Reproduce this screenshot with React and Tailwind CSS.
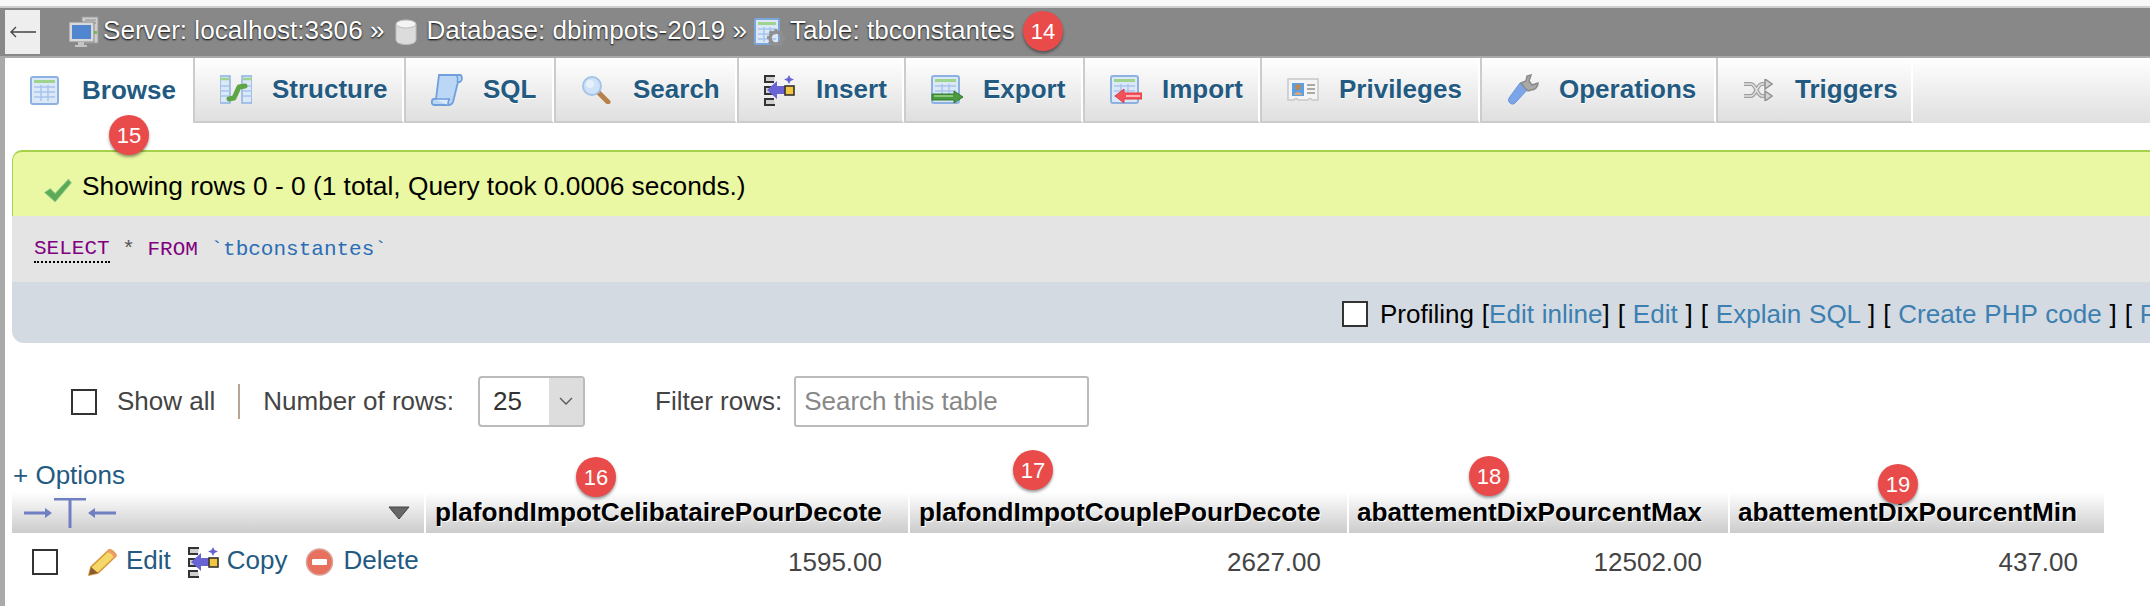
import React from 'react';

const TableBase = ({ children }) => (
    <svg width="32" height="30" viewBox="0 0 32 30">
        <rect x="1" y="1" width="27" height="27" rx="2" fill="#dbe8f8" stroke="#8db2e2" strokeWidth="2" />
        <rect x="4" y="4" width="21" height="3" fill="#9fd48c" />
        <path d="M4 11h21M4 16h21M4 21h21M11 9v16M18 9v16" stroke="#a9c4ea" strokeWidth="1.5" />
        {children}
    </svg>
);

const BrowseIcon = () => <TableBase />;

const StructureIcon = () => (
    <svg width="32" height="30" viewBox="0 0 32 30">
        <path d="M0 1h10v27H0z" fill="#dbe8f8" stroke="#8db2e2" strokeWidth="1.5" />
        <path d="M32 1H22v27h10z" fill="#dbe8f8" stroke="#8db2e2" strokeWidth="1.5" />
        <path d="M0 4h9M23 4h9" stroke="#9fd48c" strokeWidth="2.5" />
        <path d="M1 11h8M1 16h8M1 21h8M23 11h9M23 16h9M23 21h9" stroke="#a9c4ea" strokeWidth="1.5" />
        <path d="M9 24l5-1 5-11 6-1" fill="none" stroke="#5ea545" strokeWidth="5" strokeLinecap="round" strokeLinejoin="round" />
    </svg>
);

const SqlIcon = () => (
    <svg width="32" height="32" viewBox="0 0 32 32">
        <path d="M8 1h21c2 0 3 6 0 7h-2l-5 20c-1 3-3 3-5 3H3c-3 0-3-6 0-6h2z" fill="#bcd6f5" stroke="#6f9fdc" strokeWidth="1.8" />
        <path d="M3 25h16c-2 1-2 4-2 6" fill="#dcebfb" stroke="#6f9fdc" strokeWidth="1.6" />
        <path d="M25 1c2 1 2 5 1 7" fill="none" stroke="#6f9fdc" strokeWidth="1.4" />
    </svg>
);

const SearchIcon = () => (
    <svg width="30" height="28" viewBox="0 0 30 28">
        <path d="M18 17l9 9" stroke="#b8814a" strokeWidth="5" strokeLinecap="round" />
        <circle cx="11" cy="10" r="9" fill="#cfe2f8" stroke="#a3c4e8" strokeWidth="2" />
        <circle cx="9" cy="8" r="4" fill="#e6f1fc" />
    </svg>
);

const InsertIcon = () => (
    <svg width="31" height="32" viewBox="0 0 31 32">
        <path d="M11 2H1v6h9M9 13H1v7h8M10 25H1v6h10" fill="#d0d0d0" stroke="#333" strokeWidth="2" />
        <path d="M3 16l10-9v5h8v8h-8v5z" fill="#6a63d6" />
        <rect x="21" y="12" width="9" height="9" fill="#f3c63f" stroke="#333" strokeWidth="1.6" />
        <path d="M25 1l1.500 3L30 5.500 26.500 7 25 10l-1.500-3L20 5.500 23.500 4z" fill="#6a63d6" />
    </svg>
);

const ExportIcon = () => (
    <TableBase>
        <path d="M1 19h22v-3l9 6-9 6v-3H1z" fill="#4c9a3f" stroke="#2f7a2c" strokeWidth="1" />
        <path d="M3 21h19" stroke="#9fd48c" strokeWidth="1.5" />
    </TableBase>
);

const ImportIcon = () => (
    <TableBase>
        <path d="M32 18H14v-4l-9 7 9 7v-4h18z" fill="#f0545a" stroke="#e53a3f" strokeWidth="1" />
        <path d="M16 21h14" stroke="#ffb4b4" strokeWidth="2" />
    </TableBase>
);

const PrivilegesIcon = () => (
    <svg width="32" height="24" viewBox="0 0 32 24">
        <path d="M1 1h30v21h-6c-1-2-3-2-4 0H11c-1-2-3-2-4 0H1z" fill="#f4f4f4" stroke="#c8c8c8" strokeWidth="1.5" />
        <rect x="5" y="5" width="12" height="13" fill="#5b9fe6" />
        <circle cx="11" cy="9" r="3" fill="#b98a58" />
        <path d="M7 17c0-4 8-4 8 0z" fill="#d8a878" />
        <path d="M20 7h8M20 11h8M20 15h8" stroke="#a9a9a9" strokeWidth="2" />
    </svg>
);

const OperationsIcon = () => (
    <svg width="34" height="32" viewBox="0 0 34 32">
        <path d="M21 15L8 29c-3 3-8-1-6-5l11-15z" fill="#7ba5e8" stroke="#6a93d8" strokeWidth="1" />
        <path d="M14 9l5-2 1-5 4-1-2 6 3 4 6-2c0 4-3 7-7 7l-3 1-4-4z" fill="#a9a9a9" stroke="#8a8a8a" strokeWidth="1.5" />
    </svg>
);

const TriggersIcon = () => (
    <svg width="30" height="22" viewBox="0 0 30 22">
        <path d="M1 5h7c5 0 6 12 11 12h5M1 17h7c5 0 6-12 11-12h5" fill="none" stroke="#a0a0a0" strokeWidth="4" />
        <path d="M1 5h7c5 0 6 12 11 12h5M1 17h7c5 0 6-12 11-12h5" fill="none" stroke="#e2e2e2" strokeWidth="1.500" />
        <path d="M22 0l7 5-7 5zM22 12l7 5-7 5z" fill="#d4d4d4" stroke="#909090" strokeWidth="1.500" />
    </svg>
);

const ServerIcon = () => (
    <svg width="31" height="32" viewBox="0 0 31 32">
        <path d="M14 1h16v26H14z" fill="#cfcfcf" stroke="#9a9a9a" />
        <path d="M17 4h11M17 7h11" stroke="#8a8a8a" />
        <rect x="26" y="15" width="3" height="3" fill="#6fc04f" />
        <rect x="1" y="6" width="25" height="20" fill="#d8d8d8" stroke="#8a8a8a" />
        <rect x="4" y="9" width="19" height="14" fill="#4f86cf" />
        <path d="M10 26h6v3h3v2H7v-2h3z" fill="#c4c4c4" />
    </svg>
);

const DatabaseIcon = () => (
    <svg width="22" height="26" viewBox="0 0 22 26">
        <path d="M1 5v16c0 6 20 6 20 0V5z" fill="#dcdcdc" stroke="#bdbdbd" />
        <ellipse cx="11" cy="5" rx="10" ry="4" fill="#f4f4f4" stroke="#bdbdbd" />
    </svg>
);

const TableGearIcon = () => (
    <svg width="31" height="29" viewBox="0 0 31 29">
        <rect x="1" y="1" width="24" height="25" rx="1" fill="#dbe8f8" stroke="#7ea6de" strokeWidth="2" />
        <rect x="4" y="4" width="18" height="3" fill="#9fd48c" />
        <path d="M4 11h18M4 16h18M4 21h18M10 9v15M16 9v15" stroke="#a9c4ea" strokeWidth="1.5" />
        <circle cx="22" cy="20" r="6" fill="none" stroke="#8f8f8f" strokeWidth="3.500" />
        <circle cx="22" cy="20" r="8" fill="none" stroke="#8f8f8f" strokeWidth="2" strokeDasharray="3 3" />
    </svg>
);

const PencilIcon = () => (
    <svg width="31" height="29" viewBox="0 0 31 29">
        <path d="M2 27l2-8L22 2c2-1 7 3 7 6L11 25z" fill="#f5d76a" stroke="#d9993a" strokeWidth="1.600" />
        <path d="M2 27l2-8 7 6z" fill="#8a5a30" />
        <path d="M21 3c3 0 6 3 7 6" stroke="#f09a6a" strokeWidth="3" fill="none" />
    </svg>
);

const DeleteIcon = () => (
    <svg width="29" height="28" viewBox="0 0 29 28">
        <circle cx="14.500" cy="14" r="13" fill="#e8705f" stroke="#d9a39a" strokeWidth="1.500" />
        <rect x="7" y="11" width="15" height="6" rx="1" fill="#fff" />
    </svg>
);

const ResizeIcon = () => (
    <svg width="92" height="30" viewBox="0 0 92 30">
        <path d="M0 15h23M30 1h32M46 1v29M69 15h23" fill="none" stroke="#707fc2" strokeWidth="3" />
        <path d="M21 10l7 5-7 5zM71 10l-7 5 7 5z" fill="#707fc2" />
    </svg>
);

const tabs = [
    { name: 'Browse', Icon: BrowseIcon, width: 'w-[188px]', active: true },
    { name: 'Structure', Icon: StructureIcon, width: 'w-[211px]' },
    { name: 'SQL', Icon: SqlIcon, width: 'w-[150px]' },
    { name: 'Search', Icon: SearchIcon, width: 'w-[183px]' },
    { name: 'Insert', Icon: InsertIcon, width: 'w-[167px]' },
    { name: 'Export', Icon: ExportIcon, width: 'w-[179px]' },
    { name: 'Import', Icon: ImportIcon, width: 'w-[177px]' },
    { name: 'Privileges', Icon: PrivilegesIcon, width: 'w-[220px]' },
    { name: 'Operations', Icon: OperationsIcon, width: 'w-[236px]' },
    { name: 'Triggers', Icon: TriggersIcon, width: 'w-[197px]' },
];

const columns = [
    { name: 'plafondImpotCelibatairePourDecote', value: '1595.00', pad: 'pl-[9px]' },
    { name: 'plafondImpotCouplePourDecote', value: '2627.00', pad: 'pl-[9px]' },
    { name: 'abattementDixPourcentMax', value: '12502.00', pad: 'pl-[8px]' },
    { name: 'abattementDixPourcentMin', value: '437.00', pad: 'pl-[8px]' },
];

const badges = [
    { n: 14, pos: 'left-[1023px] top-[11px]' },
    { n: 15, pos: 'left-[109px] top-[115px]' },
    { n: 16, pos: 'left-[576px] top-[457px]' },
    { n: 17, pos: 'left-[1013px] top-[450px]' },
    { n: 18, pos: 'left-[1469px] top-[456px]' },
    { n: 19, pos: 'left-[1878px] top-[464px]' },
];

export default function App() {
    return (
        <div className="relative w-[2150px] h-[606px] overflow-hidden bg-white font-['Liberation_Sans',Arial,sans-serif] text-[26px] text-black">
            {/* Top strip */}
            <div className="h-[8px] bg-[#f8f8f8] border-b-2 border-[#cfcfcf]" />

            {/* Breadcrumb */}
            <div className="flex items-center h-[48px] bg-[#888888] pl-[5px] text-[26.1px] text-white [text-shadow:0_1px_2px_#000] whitespace-nowrap">
                <div className="flex items-center justify-center w-[35px] h-[44px] bg-[#eeeeee]">
                    <svg width="26" height="12" viewBox="0 0 26 12"><path d="M1 6h25M6 1L1 6l5 5" fill="none" stroke="#444" strokeWidth="1.300" /></svg>
                </div>
                <span className="ml-[28px] blur-[0.4px]"><ServerIcon /></span>
                <span className="ml-[4px] -mt-[2px]">Server: localhost:3306 »</span>
                <span className="ml-[11px] blur-[0.4px]"><DatabaseIcon /></span>
                <span className="ml-[9px] -mt-[2px]">Database: dbimpots-2019 »</span>
                <span className="ml-[7px] blur-[0.4px]"><TableGearIcon /></span>
                <span className="ml-[5px] -mt-[2px]">Table: tbconstantes</span>
            </div>
            <div className="h-[2px] bg-[#aaaaaa]" />

            <div className="border-l-[5px] border-[#aaaaaa] h-[548px]">
                {/* Tabs */}
                <div className="flex h-[65px] bg-gradient-to-b from-white to-[#dfdfdf]">
                    {tabs.map(({ name, Icon, width, active }) => (
                        <div
                            key={name}
                            className={`flex items-center pl-[25px] ${width} ${active ? 'bg-white' : 'bg-gradient-to-b from-white to-[#dfdfdf] border-l-2 border-b-2 border-[#cccccc] border-r-2 border-r-white'}`}
                        >
                            <span className="w-[52px] shrink-0 blur-[0.4px]"><Icon /></span>
                            <span className="font-bold text-[26px] text-[#235a81] [text-shadow:0_1px_0_#fff]">{name}</span>
                        </div>
                    ))}
                </div>

                {/* Result message + query box */}
                <div className="mt-[27px] ml-[7px]">
                    <div className="flex items-center h-[66px] pl-[30px] pt-[6px] bg-[#eaf8a3] border-t-2 border-l border-[#a6d24b] rounded-tl-[10px] gap-[9px]">
                        <svg width="30" height="25" viewBox="0 0 30 26" className="mt-[6px] blur-[0.4px]">
                            <path d="M1 15l6-4 5 5L26 1c1 2 2 3 3 4L12 25z" fill="#5cab57" stroke="#9ccf97" strokeWidth="1" />
                        </svg>
                        <span className="text-[26.3px]">Showing rows 0 - 0 (1 total, Query took 0.0006 seconds.)</span>
                    </div>
                    <div className="flex items-center h-[66px] pl-[22px] pt-[1px] bg-[#e4e4e4] font-['Liberation_Mono',monospace] text-[21px]">
                        <span className="text-[#800080] border-b-2 border-dotted border-black leading-[24px]">SELECT</span>
                        <span className="text-[#555] whitespace-pre"> * </span>
                        <span className="text-[#800080]">FROM</span>
                        <span className="text-[#2a6db5] whitespace-pre"> `tbconstantes`</span>
                    </div>
                    <div className="flex items-center h-[61px] pl-[1330px] pt-[3px] bg-[#d3dae1] rounded-bl-[12px] whitespace-pre [word-spacing:0.7px]">
                        <input type="checkbox" className="appearance-none shrink-0 w-[26px] h-[26px] bg-white border-2 border-[#333]" />
                        <span className="ml-[12px]">Profiling [<span className="text-[#3c7fb1]">Edit inline</span>] [ <span className="text-[#3c7fb1]">Edit</span> ] [ <span className="text-[#3c7fb1]">Explain SQL</span> ] [ <span className="text-[#3c7fb1]">Create PHP code</span> ] [ <span className="text-[#3c7fb1]">Refresh</span> ]</span>
                    </div>
                </div>

                {/* Row controls */}
                <div className="flex items-center h-[51px] mt-[33px] pl-[66px] text-[#444] whitespace-nowrap">
                    <input type="checkbox" className="appearance-none shrink-0 w-[26px] h-[26px] bg-white border-2 border-[#333]" />
                    <span className="ml-[20px]">Show all</span>
                    <span className="ml-[23px] w-[2px] h-[35px] bg-[#b9a594]" />
                    <span className="ml-[23px]">Number of rows:</span>
                    <div className="flex ml-[24px] w-[107px] h-[51px] border-2 border-[#bbbbbb] rounded-[4px] overflow-hidden text-[#333]">
                        <span className="flex items-center flex-1 pl-[13px]">25</span>
                        <span className="flex items-center justify-center w-[34px] bg-[#dddddd]">
                            <svg width="14" height="9" viewBox="0 0 14 9"><path d="M1 1l6 6 6-6" fill="none" stroke="#555" strokeWidth="1.300" /></svg>
                        </span>
                    </div>
                    <span className="ml-[70px]">Filter rows:</span>
                    <input
                        placeholder="Search this table"
                        className="ml-[12px] w-[295px] h-[51px] px-[8px] bg-white border-2 border-[#bbbbbb] rounded-[3px] placeholder:text-[#888]"
                    />
                </div>

                {/* Table */}
                <div className="ml-[8px] mt-[33px] h-[32px] leading-[30px] text-[#235a81]">+ Options</div>
                <div className="grid grid-cols-[412px_482px_437px_379px_374px] gap-x-[2px] ml-[7px] w-[2092px]">
                    <div className="flex items-center justify-between h-[41px] pl-[12px] pr-[14px] bg-gradient-to-b from-white to-[#cccccc]">
                        <ResizeIcon />
                        <svg width="22" height="14" viewBox="0 0 22 14"><path d="M1 1h20L11 13z" fill="#666" stroke="#444" /></svg>
                    </div>
                    {columns.map((c) => (
                        <div key={c.name} className={`flex items-center h-[41px] ${c.pad} bg-gradient-to-b from-white to-[#cccccc] font-bold text-[26.2px] [text-shadow:1px_1px_0_#fff]`}>
                            {c.name}
                        </div>
                    ))}

                    {/* Data row */}
                    <div className="flex items-center h-[58px] pl-[20px] text-[#235a81]">
                        <input type="checkbox" className="appearance-none shrink-0 w-[26px] h-[26px] bg-white border-2 border-[#333]" />
                        <span className="ml-[29px] blur-[0.4px]"><PencilIcon /></span>
                        <span className="ml-[8px] -mt-[4px]">Edit</span>
                        <span className="ml-[17px] blur-[0.4px]"><InsertIcon /></span>
                        <span className="ml-[8px] -mt-[4px]">Copy</span>
                        <span className="ml-[17px] blur-[0.4px]"><DeleteIcon /></span>
                        <span className="ml-[10px] -mt-[4px]">Delete</span>
                    </div>
                    {columns.map((c) => (
                        <div key={c.name} className="flex items-center justify-end h-[58px] pr-[26px] text-[#444]">{c.value}</div>
                    ))}
                </div>
            </div>

            {/* Numbered callouts */}
            {badges.map((b) => (
                <div
                    key={b.n}
                    className={`absolute ${b.pos} flex items-center justify-center w-[40px] h-[40px] rounded-full bg-[#e94b4b] text-white text-[22px] shadow-[0_2px_3px_rgba(0,0,0,0.4)]`}
                >
                    {b.n}
                </div>
            ))}
        </div>
    );
}
